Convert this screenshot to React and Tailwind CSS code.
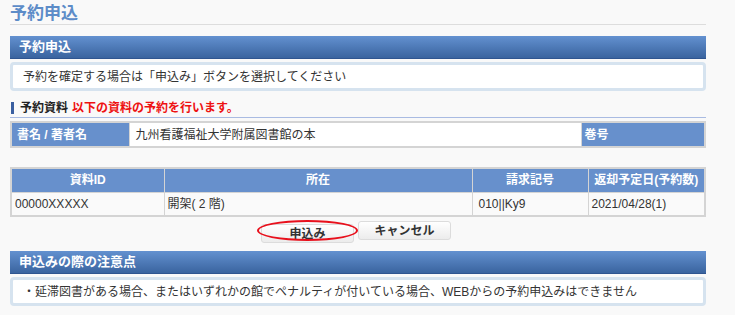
import React from "react";

const font = { fontFamily: '"Liberation Sans", "Noto Sans CJK JP", sans-serif' };

const SectionBar = ({ title }) => (
  <div className="h-[23px] flex items-center px-[9px] bg-gradient-to-b from-[#6391d0] to-[#3a649f] border-b border-[#2f5590] text-white font-bold text-[13px]">
    {title}
  </div>
);

const NoteBox = ({ children }) => (
  <div className="mt-[3px] rounded-[4px] border-[3px] border-[#d6e3ef] bg-white h-[29px] flex items-center px-[10px] text-[12px] text-[#333]">
    {children}
  </div>
);

const rows = [
  { id: "00000XXXXX", loc: "開架( 2 階)", call: "010||Ky9", due: "2021/04/28(1)" },
];

export default function App() {
  return (
    <div className="w-[735px] h-[315px] bg-[#f9f9f9] overflow-hidden" style={font}>
      <div className="w-[696px] ml-[10px]">
        <h1 className="pt-[4px] h-[25px] text-[17px] font-bold text-[#5d8cc8] leading-[20px] border-b border-[#dddddd]">
          予約申込
        </h1>

        <div className="mt-[11px]">
          <SectionBar title="予約申込" />
          <NoteBox>予約を確定する場合は「申込み」ボタンを選択してください</NoteBox>
        </div>

        <div className="mt-[9px] flex items-center h-[18px] text-[12px] font-bold border-b border-[#a9bbe2] pb-[1px]">
          <span className="w-[3px] h-[12px] bg-[#3a5fa0] ml-[1px] mr-[6px]" />
          <span className="text-[#222]">予約資料</span>
          <span className="text-[#ee1111] ml-[4px]">以下の資料の予約を行います。</span>
        </div>

        <table className="mt-[3px] w-full border-collapse border-2 border-[#d4d4d4] text-[12px]">
          <tbody>
            <tr className="h-[25px]">
              <td className="w-[118px] bg-[#6790cc] text-white font-bold px-[5px] border border-[#d4d4d4]">書名 / 著者名</td>
              <td className="bg-white px-[6px] text-[#333] border border-[#d4d4d4]">九州看護福祉大学附属図書館の本</td>
              <td className="w-[124px] bg-[#6790cc] text-white font-bold px-[3px] border border-[#d4d4d4]">巻号</td>
            </tr>
          </tbody>
        </table>

        <table className="mt-[19px] w-full border-collapse border-2 border-[#d4d4d4] text-[12px]">
          <thead>
            <tr className="h-[24px] bg-[#6790cc] text-white font-bold">
              <th className="w-[153px] border border-[#d4d4d4] font-bold">資料ID</th>
              <th className="border border-[#d4d4d4] font-bold">所在</th>
              <th className="w-[116px] border border-[#d4d4d4] font-bold">請求記号</th>
              <th className="w-[117px] border border-[#d4d4d4] font-bold">返却予定日(予約数)</th>
            </tr>
          </thead>
          <tbody>
            {rows.map((r) => (
              <tr key={r.id} className="h-[24px] bg-[#fafafa] text-[#333]">
                <td className="px-[3px] border border-[#d4d4d4]">{r.id}</td>
                <td className="px-[3px] border border-[#d4d4d4]">{r.loc}</td>
                <td className="px-[6px] border border-[#d4d4d4]">{r.call}</td>
                <td className="px-[3px] border border-[#d4d4d4]">{r.due}</td>
              </tr>
            ))}
          </tbody>
        </table>

        <div className="mt-[4px] flex justify-center gap-[4px] pr-[4px]">
          <div className="relative">
            <button className="w-[93px] h-[19px] rounded-[3px] border border-[#dcdcdc] bg-gradient-to-b from-white to-[#ececec] text-[12px] font-bold text-[#333]">
              申込み
            </button>
            <span className="absolute left-[-4px] top-[-1px] w-[101px] h-[21px] rounded-[50%] border-2 border-[#e8101c] pointer-events-none" />
          </div>
          <button className="w-[93px] h-[19px] rounded-[3px] border border-[#dcdcdc] bg-gradient-to-b from-white to-[#ececec] text-[12px] font-bold text-[#333]">
            キャンセル
          </button>
        </div>

        <div className="mt-[6px]">
          <SectionBar title="申込みの際の注意点" />
          <NoteBox>・延滞図書がある場合、またはいずれかの館でペナルティが付いている場合、WEBからの予約申込みはできません</NoteBox>
        </div>
      </div>
    </div>
  );
}
